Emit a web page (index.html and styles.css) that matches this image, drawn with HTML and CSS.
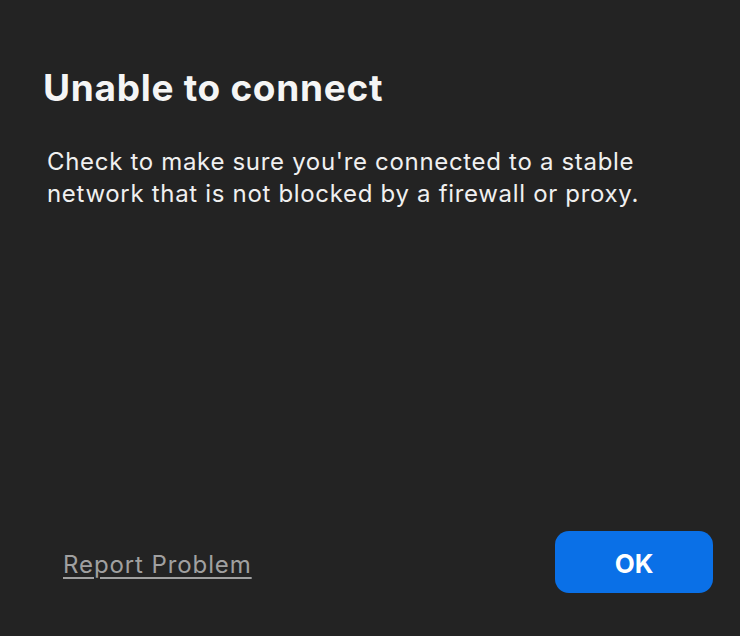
FILE: index.html
```html
<!DOCTYPE html>
<html>
<head>
<meta charset="utf-8">
<link rel="stylesheet" href="styles.css">
</head>
<body>
<div class="dialog">
  <div class="content">
    <h1 class="title">Unable to connect</h1>
    <p class="message">Check to make sure you're connected to a stable network that is not blocked by a firewall or proxy.</p>
  </div>
  <div class="footer">
    <a class="report" href="#">Report Problem</a>
    <button class="ok">OK</button>
  </div>
</div>
</body>
</html>
```
FILE: styles.css
```css
html, body {
  margin: 0;
  padding: 0;
  background: #232323;
}
body {
  width: 740px;
  height: 636px;
  overflow: hidden;
  font-family: Inter, "Noto Sans", sans-serif;
  color: #f2f2f2;
}
.dialog {
  box-sizing: border-box;
  height: 636px;
  display: flex;
  flex-direction: column;
  justify-content: space-between;
  padding: 66px 27px 43px 43px;
}
.title {
  margin: 0;
  font-size: 37px;
  font-weight: 700;
  line-height: 44px;
  letter-spacing: 0.7px;
  color: #f5f5f5;
}
.message {
  margin: 36px 0 0 4px;
  font-size: 24px;
  line-height: 32px;
  font-weight: 400;
  letter-spacing: 0.68px;
  color: #f0f0f0;
  max-width: 650px;
}
.footer {
  display: flex;
  align-items: center;
  justify-content: space-between;
  padding-left: 20px;
}
.report {
  font-size: 24px;
  letter-spacing: 0.9px;
  color: #a0a0a0;
  text-decoration: underline;
  text-underline-offset: 4px;
  text-decoration-thickness: 1.5px;
  position: relative;
  top: 2px;
}
.ok {
  width: 158px;
  height: 62px;
  border: none;
  border-radius: 14px;
  background: #0a70e7;
  color: #ffffff;
  font-family: Inter, sans-serif;
  font-weight: 700;
  font-size: 26px;
  padding-top: 4px;
}
```
